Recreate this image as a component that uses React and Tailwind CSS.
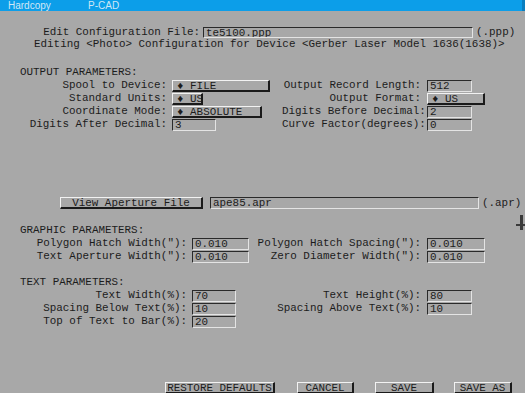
import React from "react";

const Field = ({ w, h = "h-[12px]", children }) => (
  <div
    className={`${w} ${h} border-t border-l border-t-[#2a2a2a] border-l-[#2a2a2a] border-b border-r border-b-[#e4e4e4] border-r-[#e4e4e4] pl-[2px] leading-[10px] whitespace-nowrap overflow-hidden`}
  >
    {children}
  </div>
);

const Btn = ({ w, children, center }) => (
  <div
    className={`${w} h-[12px] border-t border-l border-t-[#f2f2f2] border-l-[#f2f2f2] border-b-2 border-r-2 border-b-[#1a1a1a] border-r-[#1a1a1a] leading-[10px] whitespace-nowrap overflow-hidden ${center ? "text-center" : "pl-[4px]"}`}
  >
    {children}
  </div>
);

const Row = ({ lw, label, mw, widget, rw, rlabel, rwidget }) => (
  <div className="flex h-[13px] items-center">
    <div className={`${lw} shrink-0 text-right whitespace-pre`}>{label}</div>
    <div className="w-[5px] shrink-0" />
    <div className={`${mw} shrink-0`}>{widget}</div>
    <div className={`${rw} shrink-0 text-right whitespace-pre`}>{rlabel}</div>
    <div className="w-[6px] shrink-0" />
    {rwidget}
  </div>
);

export default function App() {
  return (
    <div
      className="relative w-[525px] h-[393px] overflow-hidden bg-[#a8a8a8] text-[#1c1c1c] text-[10.9px] leading-[13px]"
      style={{ fontFamily: '"Liberation Mono", "DejaVu Sans Mono", monospace' }}
    >
      {/* title bar */}
      <div
        className="flex h-[11px] items-center bg-[#0c9ee9] text-[10px] leading-[11px] text-[#cfe7f6] border-r-[3px] border-r-[#0a7fc0]"
        style={{ fontFamily: '"Liberation Sans", Arial, sans-serif' }}
      >
        <span className="ml-[8px] w-[80px]">Hardcopy</span>
        <span>P-CAD</span>
      </div>

      {/* edit config file */}
      <div className="mt-[16px] flex h-[11px] items-center leading-[11px]">
        <div className="w-[200px] text-right whitespace-pre">Edit Configuration File:</div>
        <div className="w-[3px]" />
        <Field w="w-[270px]" h="h-[11px]">te5100.ppp</Field>
        <div className="ml-[3px]">(.ppp)</div>
      </div>
      <div className="mt-[1px] h-[11px] pl-[34px] leading-[11px] whitespace-pre">
        Editing &lt;Photo&gt; Configuration for Device &lt;Gerber Laser Model 1636(1638)&gt;
      </div>

      {/* output parameters */}
      <div className="mt-[16px] h-[13px] pl-[20px]">OUTPUT PARAMETERS:</div>
      <Row
        lw="w-[167px]"
        label="Spool to Device:"
        mw="w-[110px]"
        widget={<Btn w="w-[98px]">♦ FILE</Btn>}
        rw="w-[139px]"
        rlabel="Output Record Length:"
        rwidget={<Field w="w-[45px]">512</Field>}
      />
      <Row
        lw="w-[167px]"
        label="Standard Units:"
        mw="w-[110px]"
        widget={<Btn w="w-[31px]">♦ US</Btn>}
        rw="w-[139px]"
        rlabel="Output Format:"
        rwidget={<Btn w="w-[58px]">♦ US</Btn>}
      />
      <Row
        lw="w-[167px]"
        label="Coordinate Mode:"
        mw="w-[110px]"
        widget={<Btn w="w-[90px]">♦ ABSOLUTE</Btn>}
        rw="w-[139px]"
        rlabel="Digits Before Decimal:"
        rwidget={<Field w="w-[45px]">2</Field>}
      />
      <Row
        lw="w-[167px]"
        label="Digits After Decimal:"
        mw="w-[110px]"
        widget={<Field w="w-[44px]">3</Field>}
        rw="w-[139px]"
        rlabel="Curve Factor(degrees):"
        rwidget={<Field w="w-[45px]">0</Field>}
      />

      {/* aperture file */}
      <div className="mt-[66px] flex h-[12px] items-center pl-[60px]">
        <Btn w="w-[143px]" center>
          View Aperture File
        </Btn>
        <div className="w-[7px]" />
        <Field w="w-[269px]">ape85.apr</Field>
        <div className="ml-[3px]">(.apr)</div>
      </div>

      {/* graphic parameters */}
      <div className="mt-[15px] h-[13px] pl-[20px]">GRAPHIC PARAMETERS:</div>
      <Row
        lw="w-[187px]"
        label={'Polygon Hatch Width("):'}
        mw="w-[64px]"
        widget={<Field w="w-[57px]">0.010</Field>}
        rw="w-[165px]"
        rlabel={'Polygon Hatch Spacing("):'}
        rwidget={<Field w="w-[58px]">0.010</Field>}
      />
      <Row
        lw="w-[187px]"
        label={'Text Aperture Width("):'}
        mw="w-[64px]"
        widget={<Field w="w-[57px]">0.010</Field>}
        rw="w-[165px]"
        rlabel={'Zero Diameter Width("):'}
        rwidget={<Field w="w-[58px]">0.010</Field>}
      />

      {/* text parameters */}
      <div className="mt-[13px] h-[13px] pl-[20px]">TEXT PARAMETERS:</div>
      <Row
        lw="w-[187px]"
        label="Text Width(%):"
        mw="w-[64px]"
        widget={<Field w="w-[44px]">70</Field>}
        rw="w-[165px]"
        rlabel="Text Height(%):"
        rwidget={<Field w="w-[45px]">80</Field>}
      />
      <Row
        lw="w-[187px]"
        label="Spacing Below Text(%):"
        mw="w-[64px]"
        widget={<Field w="w-[44px]">10</Field>}
        rw="w-[165px]"
        rlabel="Spacing Above Text(%):"
        rwidget={<Field w="w-[45px]">10</Field>}
      />
      <Row
        lw="w-[187px]"
        label="Top of Text to Bar(%):"
        mw="w-[64px]"
        widget={<Field w="w-[44px]">20</Field>}
        rw="w-[165px]"
        rlabel=""
        rwidget={null}
      />

      {/* bottom buttons */}
      <div className="mt-[54px] flex pl-[165px]">
        <Btn w="w-[110px]" center>RESTORE DEFAULTS</Btn>
        <div className="w-[22px]" />
        <Btn w="w-[57px]" center>CANCEL</Btn>
        <div className="w-[21px]" />
        <Btn w="w-[59px]" center>SAVE</Btn>
        <div className="w-[20px]" />
        <Btn w="w-[58px]" center>SAVE AS</Btn>
      </div>

      {/* cursor cross at right edge */}
      <div className="absolute left-[520px] top-[215px] h-[15px] w-[3px] bg-[#3a3a3a]" />
      <div className="absolute left-[516px] top-[224px] h-[2px] w-[9px] bg-[#3a3a3a]" />
    </div>
  );
}
